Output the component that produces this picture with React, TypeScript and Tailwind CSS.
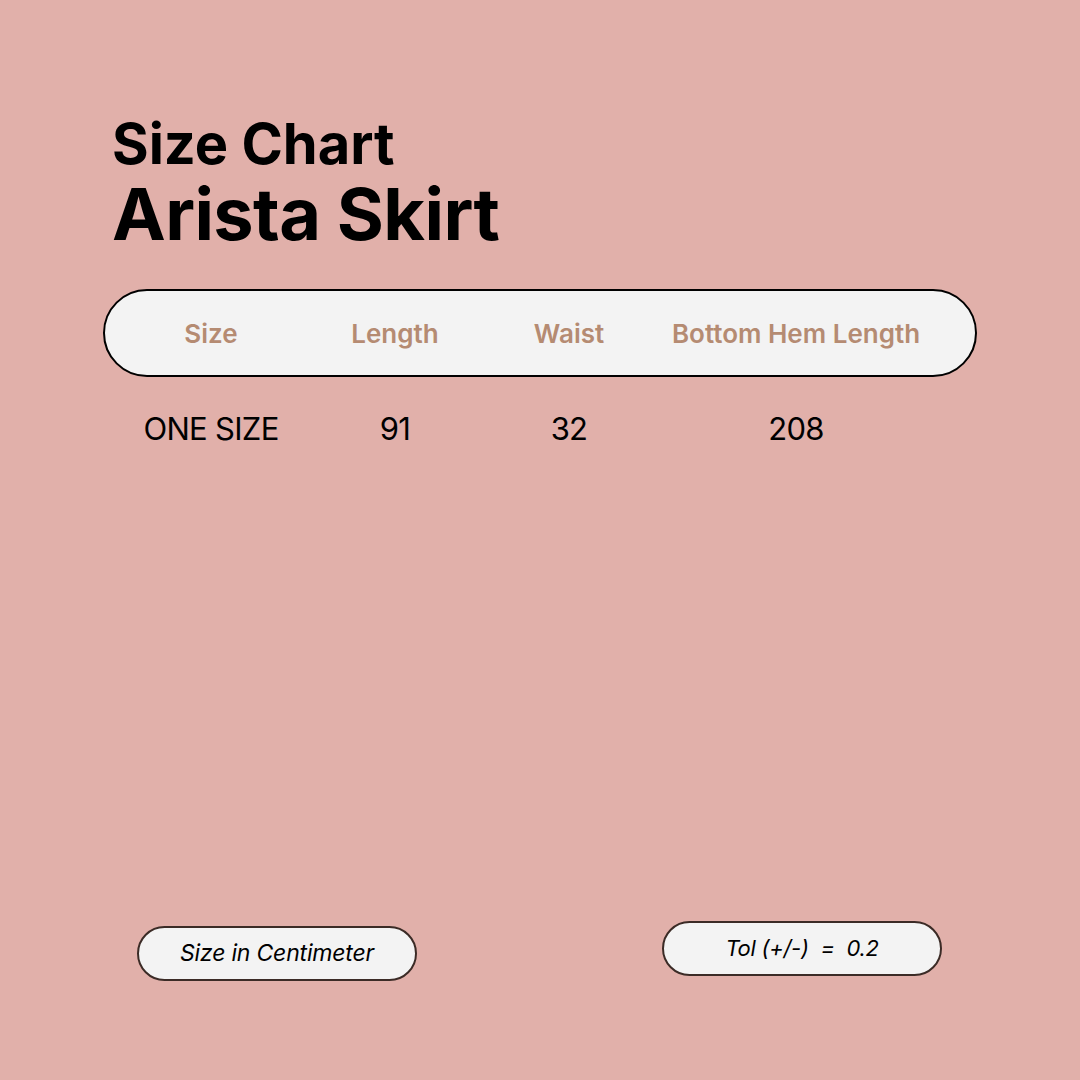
export default function App() {
  const font = { fontFamily: 'Inter, "Noto Sans", sans-serif' };
  return (
    <div className="w-[1080px] h-[1080px] bg-[#e1b0aa] flex flex-col text-black" style={font}>
      <div className="pl-[112px] pt-[112px] flex flex-col">
        <div className="text-[56px] font-bold leading-[64px] tracking-[0px]">Size Chart</div>
        <div className="text-[72px] font-bold leading-[76px] tracking-[-0.6px]">Arista Skirt</div>
      </div>
      <div className="ml-[103px] mt-[37px] w-[874px] h-[88px] rounded-full border-2 border-black bg-[#f3f3f3] grid grid-cols-[212px_156px_192px_262px] items-center text-[26px] font-semibold text-[#b58b72] tracking-[0px]">
        <div className="text-center">Size</div>
        <div className="text-center">Length</div>
        <div className="text-center">Waist</div>
        <div className="text-center">Bottom Hem Length</div>
      </div>
      <div className="ml-[105px] mt-[34px] grid grid-cols-[212px_156px_192px_262px] items-center text-[31px] font-normal tracking-[-0.7px] leading-[36px]">
        <div className="text-center">ONE SIZE</div>
        <div className="text-center">91</div>
        <div className="text-center">32</div>
        <div className="text-center">208</div>
      </div>
      <div className="flex-1" />
      <div className="flex items-start pb-[99px]">
        <div className="ml-[137px] mt-[5px] w-[280px] h-[55px] rounded-full border-2 border-[#3b2b26] bg-[#f3f3f3] flex items-center justify-center text-[23px] italic tracking-[-0.2px]">
          Size in Centimeter
        </div>
        <div className="ml-[245px] w-[280px] h-[55px] rounded-full border-2 border-[#3b2b26] bg-[#f3f3f3] flex items-center justify-center text-[22px] italic tracking-[-0.3px] whitespace-pre">
          {"Tol (+/-)  =  0.2"}
        </div>
      </div>
    </div>
  );
}
